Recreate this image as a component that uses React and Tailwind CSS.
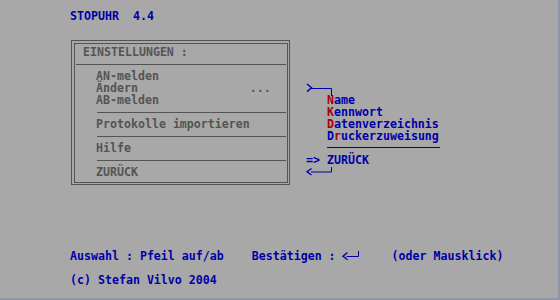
export default function App() {
  return (
    <div className="w-[560px] h-[300px] bg-[#8c96a4]">
      <div className="w-[558px] h-[298px] bg-[#a8a8a8] pt-[9.5px] font-['DejaVu_Sans_Mono',monospace] font-bold text-[11.627px] leading-[12px] whitespace-pre">
        {/* Titel */}
        <div className="h-[12px] pl-[70px] text-[#0000a8]">STOPUHR  4.4</div>

        <div className="flex mt-[18.5px]">
          {/* Einstellungen-Box */}
          <div className="ml-[71px] w-[219px] h-[145px] border border-[#545454] pt-[2px] pl-[2px] pr-px pb-px">
            <div className="h-full border border-[#545454] pt-[1.5px] text-[#545454]">
              <div className="h-[12px] pl-[8px]">EINSTELLUNGEN :</div>
              <div className="h-[12px] pt-[6px] mx-px">
                <div className="h-px bg-[#545454]" />
              </div>
              <div className="h-[12px] pl-[21px]">AN-melden</div>
              <div className="h-[12px] pl-[21px]">Ändern                ...</div>
              <div className="h-[12px] pl-[21px]">AB-melden</div>
              <div className="h-[12px] pt-[6px] ml-[22px] mr-px">
                <div className="h-px bg-[#545454]" />
              </div>
              <div className="h-[12px] pl-[21px]">Protokolle importieren</div>
              <div className="h-[12px] pt-[6px] ml-[22px] mr-px">
                <div className="h-px bg-[#545454]" />
              </div>
              <div className="h-[12px] pl-[21px]">Hilfe</div>
              <div className="h-[12px] pt-[6px] ml-[22px] mr-px">
                <div className="h-px bg-[#545454]" />
              </div>
              <div className="h-[12px] pl-[21px]">ZURÜCK</div>
            </div>
          </div>

          {/* Untermenü */}
          <div className="ml-[16px] mt-[41.5px] text-[#0000a8]">
            <div className="h-[12px]">
              <svg width="27" height="12" className="overflow-visible" fill="none" stroke="#0000a8">
                <path d="M1 2 L5.5 5.8 L1 9.6" strokeWidth="1.4" />
                <path d="M5 6.5 H25.5 V14" strokeWidth="1" />
              </svg>
            </div>
            <div className="h-[12px] pl-[21px]">
              <span className="text-[#a80000]">N</span>ame
            </div>
            <div className="h-[12px] pl-[21px]">
              <span className="text-[#a80000]">K</span>ennwort
            </div>
            <div className="h-[12px] pl-[21px]">
              <span className="text-[#a80000]">D</span>atenverzeichnis
            </div>
            <div className="h-[12px] pl-[21px]">
              D<span className="text-[#a80000]">r</span>uckerzuweisung
            </div>
            <div className="h-[12px] pt-[5.5px] ml-[21px] w-[113px]">
              <div className="h-px bg-[#0000a8]" />
            </div>
            <div className="h-[12px]">=&gt; ZURÜCK</div>
            <div className="h-[12px]">
              <svg width="27" height="12" className="overflow-visible" fill="none" stroke="#0000a8">
                <path d="M5.5 2.5 L1 5.8 L5.5 9" strokeWidth="1.4" />
                <path d="M5 6 H25.5 V1" strokeWidth="1" />
              </svg>
            </div>
          </div>
        </div>

        {/* Fußzeile */}
        <div className="mt-[64.5px] pl-[70px] text-[#0000a8]">
          <div className="flex h-[12px]">
            <span>Auswahl : Pfeil auf/ab    Bestätigen : </span>
            <svg width="21" height="12" className="overflow-visible" fill="none" stroke="#0000a8">
              <path d="M4.5 2.5 L0 6.2 L4.5 9.8" strokeWidth="1.4" />
              <path d="M3.5 6.5 H15.5 V1" strokeWidth="1" />
            </svg>
            <span>    (oder Mausklick)</span>
          </div>
          <div className="h-[12px]" />
          <div className="h-[12px]">(c) Stefan Vilvo 2004</div>
        </div>
      </div>
    </div>
  );
}
